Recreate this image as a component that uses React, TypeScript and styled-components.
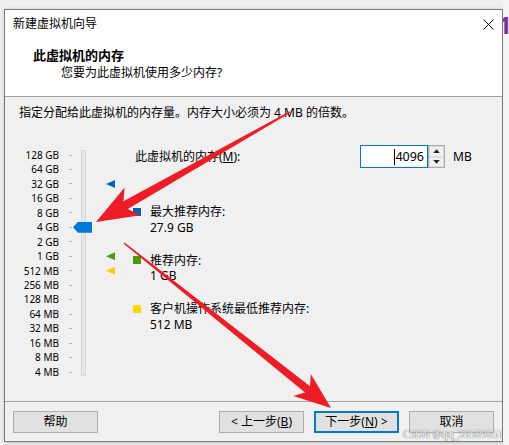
import React from 'react'
import styled, { createGlobalStyle } from 'styled-components'

const GlobalStyle = createGlobalStyle`
  html, body {
    margin: 0;
    padding: 0;
  }
  body {
    background: #eeeeee;
    font-family: "Noto Sans", "Noto Sans CJK SC", sans-serif;
    font-size: 12px;
    color: #000;
  }
`

const Page = styled.div`
  position: relative;
  width: 509px;
  height: 445px;
  overflow: hidden;
  display: flex;
  align-items: flex-start;
`

const Dialog = styled.div`
  margin: 9px 0 0 4px;
  width: 499px;
  height: 433px;
  flex: none;
  box-sizing: border-box;
  border: 1px solid #7a7a7a;
  background: #f0f0f0;
  display: flex;
  flex-direction: column;
  box-shadow: 1px 1px 4px rgba(0, 0, 0, 0.2);
`

const RightEdge = styled.div`
  width: 6px;
  height: 445px;
  flex: none;
  overflow: hidden;
  padding-top: 12px;
  box-sizing: border-box;
  background: #f4f4f4;
`

const PurpleGlyph = styled.span`
  display: block;
  margin-left: -5px;
  font-size: 24px;
  line-height: 26px;
  font-weight: 700;
  color: #7b2fa0;
`

const TitleBar = styled.div`
  height: 30px;
  flex: none;
  background: #fff;
  display: flex;
  align-items: center;
  justify-content: space-between;
  padding: 0 8px 2px 8px;
  box-sizing: border-box;
`

const TitleText = styled.span`
  line-height: 16px;
`

const Header = styled.div`
  height: 57px;
  flex: none;
  background: #fff;
  border-bottom: 1px solid #a0a0a0;
  box-sizing: border-box;
  padding: 6px 0 0 28px;
`

const HeaderTitle = styled.div`
  font-size: 13px;
  font-weight: 700;
  line-height: 18px;
`

const HeaderSub = styled.div`
  margin-left: 28px;
  line-height: 18px;
`

const Body = styled.div`
  flex: 1;
  padding-top: 8px;
`

const Intro = styled.div`
  padding-left: 14px;
  line-height: 16px;
`

const Main = styled.div`
  display: flex;
  margin-top: 24px;
`

const ROW = 14.47

const SliderArea = styled.div`
  position: relative;
  width: 130px;
  height: 235px;
  flex: none;
  display: flex;
  align-items: flex-start;
`

const LabelCol = styled.div`
  width: 54px;
  padding-top: 2.8px;
`

const ScaleLabel = styled.div`
  height: ${ROW}px;
  line-height: ${ROW}px;
  font-size: 10px;
  text-align: right;
  white-space: nowrap;
`

const TickCol = styled.div`
  margin-left: 10px;
  width: 3px;
  padding-top: 2.8px;
`

const Tick = styled.div`
  height: ${ROW}px;
  display: flex;
  align-items: center;
  &::before {
    content: '';
    width: 3px;
    height: 1px;
    background: #b4b4b4;
  }
`

const Track = styled.div`
  margin: 5px 0 0 9px;
  width: 5px;
  height: 226px;
  box-sizing: border-box;
  border: 1px solid #d6d6d6;
  background: #e6e6e6;
`

const Thumb = styled.div`
  position: absolute;
  left: 68px;
  width: 19px;
  height: 11px;
  background: #0078d7;
  clip-path: polygon(0 50%, 5px 0, 100% 0, 100% 100%, 5px 100%);
`

const Marker = styled.div<{ $color: string }>`
  position: absolute;
  left: 101px;
  width: 9px;
  height: 8px;
  background: ${(p) => p.$color};
  clip-path: polygon(0 50%, 100% 0, 100% 100%);
`

const RightCol = styled.div`
  flex: 1;
`

const MemoryRow = styled.div`
  display: flex;
  align-items: center;
  height: 23px;
`

const MemLabel = styled.span`
  width: 225px;
  line-height: 16px;
`

const NumberBox = styled.div`
  width: 68px;
  height: 23px;
  box-sizing: border-box;
  border: 1px solid #0078d7;
  background: #fff;
  display: flex;
  align-items: center;
  justify-content: flex-end;
  padding-right: 3px;
  font-size: 12.5px;
`

const Caret = styled.span`
  width: 1px;
  height: 16px;
  background: #000;
`

const Spinner = styled.div`
  width: 17px;
  height: 23px;
  box-sizing: border-box;
  border: 1px solid #a8a8a8;
  display: flex;
  flex-direction: column;
`

const SpinButton = styled.div<{ $down?: boolean }>`
  flex: 1;
  border: 1px solid #dcdcdc;
  background: #f0f0f0;
  display: flex;
  align-items: center;
  justify-content: center;
  &::before {
    content: '';
    width: 7px;
    height: 4px;
    background: #222;
    clip-path: ${(p) =>
      p.$down ? 'polygon(0 0, 100% 0, 50% 100%)' : 'polygon(50% 0, 100% 100%, 0 100%)'};
  }
`

const Unit = styled.span`
  margin-left: 8px;
  line-height: 16px;
`

const Legend = styled.div`
  margin: 36px 0 0 -2px;
  display: flex;
  flex-direction: column;
  gap: 17.5px;
`

const LegendItem = styled.div`
  display: flex;
  gap: 9px;
`

const Swatch = styled.span<{ $color: string }>`
  width: 8px;
  height: 8px;
  margin-top: 3.8px;
  flex: none;
  background: ${(p) => p.$color};
`

const LegendText = styled.div`
  line-height: 15.6px;
`

const Footer = styled.div`
  height: 40px;
  flex: none;
  box-sizing: border-box;
  border-top: 1px solid #a0a0a0;
  display: flex;
  align-items: flex-start;
  gap: 10px;
  padding: 9px 8px 0 8px;
`

const Spacer = styled.div`
  flex: 1;
`

const Button = styled.div<{ $primary?: boolean }>`
  width: 85px;
  height: 22px;
  box-sizing: border-box;
  border: ${(p) => (p.$primary ? '2px solid #0078d7' : '1px solid #adadad')};
  background: #e1e1e1;
  display: flex;
  align-items: center;
  justify-content: center;
  line-height: 16px;
  white-space: pre;
`

const Overlay = styled.svg`
  position: absolute;
  left: 0;
  top: 0;
  pointer-events: none;
`

const Watermark = styled.span`
  position: absolute;
  right: 5px;
  bottom: 5px;
  font-size: 10px;
  line-height: 12px;
  color: rgba(255, 255, 255, 0.95);
  text-shadow: 0 0 1px #777, 0 0 1px #777;
  pointer-events: none;
`

type Pt = [number, number]

function arrowPoints(tail: Pt, tip: Pt, w0: number, w1: number, headLen: number, headHalf: number, sweep: number) {
  const dx = tip[0] - tail[0]
  const dy = tip[1] - tail[1]
  const len = Math.hypot(dx, dy)
  const ux = dx / len
  const uy = dy / len
  const nx = -uy
  const ny = ux
  const neck: Pt = [tip[0] - ux * headLen, tip[1] - uy * headLen]
  const barb: Pt = [tip[0] - ux * (headLen + sweep), tip[1] - uy * (headLen + sweep)]
  const pts: Pt[] = [
    [tail[0] + (nx * w0) / 2, tail[1] + (ny * w0) / 2],
    [neck[0] + (nx * w1) / 2, neck[1] + (ny * w1) / 2],
    [barb[0] + nx * headHalf, barb[1] + ny * headHalf],
    tip,
    [barb[0] - nx * headHalf, barb[1] - ny * headHalf],
    [neck[0] - (nx * w1) / 2, neck[1] - (ny * w1) / 2],
    [tail[0] - (nx * w0) / 2, tail[1] - (ny * w0) / 2],
  ]
  return pts.map((p) => p.map((v) => v.toFixed(1)).join(',')).join(' ')
}

const scale = [
  '128 GB', '64 GB', '32 GB', '16 GB', '8 GB', '4 GB', '2 GB', '1 GB',
  '512 MB', '256 MB', '128 MB', '64 MB', '32 MB', '16 MB', '8 MB', '4 MB',
]

// centre of a scale row, relative to the slider area
const rowCenter = (i: number) => 10 + i * ROW

const markers = [
  { index: 2, color: '#0067b8' },
  { index: 7, color: '#4d9a17' },
  { index: 8, color: '#f5d200' },
]

const legend = [
  { color: '#0063b1', title: '最大推荐内存:', value: '27.9 GB' },
  { color: '#4a9a0c', title: '推荐内存:', value: '1 GB' },
  { color: '#ffd800', title: '客户机操作系统最低推荐内存:', value: '512 MB' },
]

function CloseIcon() {
  return (
    <svg width='11' height='11' viewBox='0 0 11 11'>
      <path d='M0.5 0.5 L10.5 10.5 M10.5 0.5 L0.5 10.5' stroke='#000' strokeWidth='1' />
    </svg>
  )
}

export default function App() {
  return (
    <>
      <GlobalStyle />
      <Page>
        <Dialog>
          <TitleBar>
            <TitleText>新建虚拟机向导</TitleText>
            <CloseIcon />
          </TitleBar>
          <Header>
            <HeaderTitle>此虚拟机的内存</HeaderTitle>
            <HeaderSub>您要为此虚拟机使用多少内存?</HeaderSub>
          </Header>
          <Body>
            <Intro>指定分配给此虚拟机的内存量。内存大小必须为 4 MB 的倍数。</Intro>
            <Main>
              <SliderArea>
                <LabelCol>
                  {scale.map((s) => (
                    <ScaleLabel key={s}>{s}</ScaleLabel>
                  ))}
                </LabelCol>
                <TickCol>
                  {scale.map((s) => (
                    <Tick key={s} />
                  ))}
                </TickCol>
                <Track />
                {markers.map((m) => (
                  <Marker key={m.index} $color={m.color} style={{ top: rowCenter(m.index) - 4 }} />
                ))}
                <Thumb style={{ top: rowCenter(5) - 5.5 }} />
              </SliderArea>
              <RightCol>
                <MemoryRow>
                  <MemLabel>
                    此虚拟机的内存(<u>M</u>):
                  </MemLabel>
                  <NumberBox>
                    <Caret />
                    4096
                  </NumberBox>
                  <Spinner>
                    <SpinButton />
                    <SpinButton $down />
                  </Spinner>
                  <Unit>MB</Unit>
                </MemoryRow>
                <Legend>
                  {legend.map((l) => (
                    <LegendItem key={l.title}>
                      <Swatch $color={l.color} />
                      <LegendText>
                        <div>{l.title}</div>
                        <div>{l.value}</div>
                      </LegendText>
                    </LegendItem>
                  ))}
                </Legend>
              </RightCol>
            </Main>
          </Body>
          <Footer>
            <Button>帮助</Button>
            <Spacer />
            <Button>
              {'< 上一步('}
              <u>B</u>
              {')'}
            </Button>
            <Button $primary>
              {'下一步('}
              <u>N</u>
              {') >'}
            </Button>
            <Button>取消</Button>
          </Footer>
        </Dialog>
        <RightEdge>
          <PurpleGlyph>1</PurpleGlyph>
        </RightEdge>
        <Overlay width='509' height='445' viewBox='0 0 509 445'>
          <polygon points={arrowPoints([290, 112], [96, 222], 1.5, 9, 34, 16, 8)} fill='#ee1c25' />
          <polygon points={arrowPoints([124, 243], [331, 408], 1.5, 8, 30, 14, 7)} fill='#ee1c25' />
        </Overlay>
        <Watermark>CSDN @qq_39509651</Watermark>
      </Page>
    </>
  )
}
